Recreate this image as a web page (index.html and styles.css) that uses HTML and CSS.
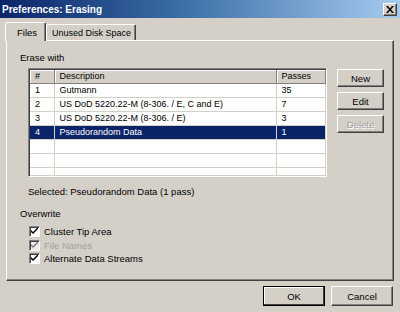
FILE: index.html
```html
<!DOCTYPE html>
<html lang="en">
<head>
    <meta charset="UTF-8">
    <title>Preferences: Erasing</title>
    <link rel="stylesheet" href="styles.css">
</head>
<body>
    <div class="dialog">
        <div class="titlebar">
            <span class="title">Preferences: Erasing</span>
            <span class="close">
                <svg width="8" height="7" viewBox="0 0 8 7"><path d="M0 0h2l2 2.5L6 0h2L5 3.5 8 7H6L4 4.5 2 7H0l3-3.5z" fill="#000"/></svg>
            </span>
        </div>

        <div class="tabs">
            <div class="tab active">Files</div>
            <div class="tab">Unused Disk Space</div>
        </div>

        <div class="panel">
            <div class="group-label">Erase with</div>
            <div class="erase-row">
                <div class="list">
                    <table>
                        <colgroup>
                            <col class="c-num">
                            <col class="c-desc">
                            <col class="c-pass">
                        </colgroup>
                        <thead>
                            <tr><th>#</th><th>Description</th><th>Passes</th></tr>
                        </thead>
                        <tbody>
                            <tr><td>1</td><td>Gutmann</td><td>35</td></tr>
                            <tr><td>2</td><td>US DoD 5220.22-M (8-306. / E, C and E)</td><td>7</td></tr>
                            <tr><td>3</td><td>US DoD 5220.22-M (8-306. / E)</td><td>3</td></tr>
                            <tr class="selected"><td>4</td><td>Pseudorandom Data</td><td>1</td></tr>
                            <tr><td></td><td></td><td></td></tr>
                            <tr><td></td><td></td><td></td></tr>
                            <tr><td></td><td></td><td></td></tr>
                        </tbody>
                    </table>
                </div>
                <div class="side-buttons">
                    <button class="btn">New</button>
                    <button class="btn">Edit</button>
                    <button class="btn" disabled>Delete</button>
                </div>
            </div>
            <div class="selected-text">Selected: Pseudorandom Data (1 pass)</div>

            <div class="group-label overwrite">Overwrite</div>
            <div class="checks">
                <label class="check"><span class="box"><svg width="7" height="7" viewBox="0 0 7 7"><path d="M0 2l2 2 5-5v2L2 6 0 4z" fill="#000"/></svg></span>Cluster Tip Area</label>
                <label class="check disabled"><span class="box"><svg width="7" height="7" viewBox="0 0 7 7"><path d="M0 2l2 2 5-5v2L2 6 0 4z" fill="#808080"/></svg></span>File Names</label>
                <label class="check"><span class="box"><svg width="7" height="7" viewBox="0 0 7 7"><path d="M0 2l2 2 5-5v2L2 6 0 4z" fill="#000"/></svg></span>Alternate Data Streams</label>
            </div>
        </div>

        <div class="footer">
            <button class="btn wide default">OK</button>
            <button class="btn wide">Cancel</button>
        </div>
    </div>
</body>
</html>
```

FILE: styles.css
```css
body {
    margin: 0;
    background-color: #d4d0c8;
    font-family: "Liberation Sans", Arial, sans-serif;
    font-size: 9px;
    color: #000;
}
.dialog {
    width: 400px;
    height: 312px;
    box-sizing: border-box;
    overflow: hidden;
}
.titlebar {
    height: 18px;
    background: linear-gradient(to right, #0a246a 0%, #3a6ea5 45%, #a6caf0 100%);
    display: flex;
    align-items: center;
    justify-content: space-between;
    padding: 0 3px 0 2px;
}
.title {
    color: #fff;
    font-weight: bold;
    font-size: 10px;
}
.close {
    width: 14px;
    height: 13px;
    box-sizing: border-box;
    background-color: #d4d0c8;
    border: 1px solid;
    border-color: #fff #404040 #404040 #fff;
    box-shadow: inset -1px -1px #808080;
    display: flex;
    align-items: center;
    justify-content: center;
}
.tabs {
    display: flex;
    align-items: flex-end;
    height: 18px;
    margin-top: 4px;
    padding-left: 5px;
}
.tab {
    height: 16px;
    width: 90px;
    box-sizing: border-box;
    padding: 3px 0 0 5px;
    border: 1px solid;
    border-bottom: none;
    border-color: #fff #404040 transparent #fff;
    box-shadow: inset -1px 0 #808080;
    border-radius: 2px 2px 0 0;
    font-size: 9px;
    white-space: nowrap;
}
.tab.active {
    height: 19px;
    width: 41px;
    padding: 4px 0 0 11px;
    margin-bottom: -1px;
    background-color: #d4d0c8;
    font-size: 9.5px;
    position: relative;
    z-index: 1;
}
.panel {
    margin: 0 6px 0 6px;
    height: 241px;
    box-sizing: border-box;
    border: 1px solid;
    border-color: #fff #404040 #404040 #fff;
    box-shadow: inset -1px -1px #808080;
    display: flex;
    flex-direction: column;
    padding-left: 13px;
}
.group-label {
    font-size: 9.5px;
    margin-top: 11px;
    line-height: 12px;
}
.erase-row {
    display: flex;
    gap: 10px;
    margin-top: 4px;
    margin-left: 8px;
}
.list {
    width: 299px;
    height: 109px;
    box-sizing: border-box;
    border: 1px solid;
    border-color: #808080 #fff #fff #808080;
    box-shadow: inset 1px 1px #404040, inset -1px -1px #d4d0c8;
    padding: 1px;
    overflow: hidden;
    background-color: #fff;
}
table {
    border-collapse: collapse;
    table-layout: fixed;
    width: 295px;
    font-size: 9px;
}
.c-num { width: 24px; }
.c-desc { width: 222px; }
.c-pass { width: 49px; }
th {
    height: 13px;
    padding: 0 0 0 5px;
    text-align: left;
    font-weight: normal;
    background-color: #d4d0c8;
    border-right: 1px solid #808080;
    border-bottom: 1px solid #808080;
    box-shadow: inset 1px 1px #fff;
    box-sizing: border-box;
}
td {
    height: 14px;
    padding: 0 0 0 5px;
    border-right: 1px solid #d4d0c8;
    border-bottom: 1px solid #d4d0c8;
    white-space: nowrap;
    overflow: hidden;
    box-sizing: border-box;
}
tr.selected td {
    background-color: #0a246a;
    color: #fff;
}
.side-buttons {
    display: flex;
    flex-direction: column;
    gap: 5px;
    margin-top: 1px;
}
.btn {
    width: 47px;
    height: 18px;
    padding: 0;
    font-family: "Liberation Sans", Arial, sans-serif;
    font-size: 9.5px;
    color: #000;
    background-color: #d4d0c8;
    border: 1px solid;
    border-color: #fff #404040 #404040 #fff;
    box-shadow: inset -1px -1px #808080;
}
.btn:disabled {
    color: #a0a0a0;
    text-shadow: 1px 1px #fff;
}
.selected-text {
    font-size: 9.5px;
    margin: 9px 0 0 8px;
    line-height: 12px;
}
.group-label.overwrite {
    margin-top: 10px;
}
.checks {
    display: flex;
    flex-direction: column;
    margin: 5px 0 0 9px;
}
.check {
    display: flex;
    align-items: center;
    gap: 4px;
    height: 13.5px;
    font-size: 9.5px;
}
.check.disabled {
    color: #a0a0a0;
}
.box {
    width: 11px;
    height: 11px;
    box-sizing: border-box;
    background-color: #fff;
    border: 1px solid;
    border-color: #808080 #fff #fff #808080;
    box-shadow: inset 1px 1px #404040;
    display: flex;
    align-items: center;
    justify-content: center;
}
.check.disabled .box {
    background-color: #eeece8;
}
.footer {
    display: flex;
    justify-content: flex-end;
    gap: 6px;
    margin-top: 5px;
    padding-right: 7px;
}
.btn.wide {
    width: 62px;
    height: 20px;
}
.btn.default {
    outline: 1px solid #000;
    outline-offset: -1px;
    border-color: #fff #404040 #404040 #fff;
    box-shadow: inset -1px -1px #404040, inset 1px 1px #fff;
}
```
